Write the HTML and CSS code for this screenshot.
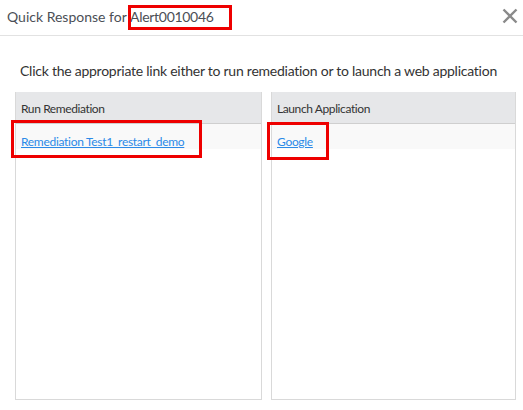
FILE: index.html
```html
<!DOCTYPE html>
<html>
<head>
<meta charset="utf-8">
<link rel="stylesheet" href="styles.css">
</head>
<body>
<div class="dialog">
  <div class="header">
    <span class="title">Quick Response for <span class="alert-id">Alert0010046</span></span>
    <svg class="close" width="16" height="16" viewBox="0 0 16 16"><path d="M1.5 1.5 L14.5 14.5 M14.5 1.5 L1.5 14.5" stroke="#8a8a8a" stroke-width="2.4" fill="none"/></svg>
  </div>
  <span class="mark mark-title"></span>
  <p class="intro">Click the appropriate link either to run remediation or to launch a web application</p>
  <div class="panels">
    <div class="panel">
      <div class="panel-head">Run Remediation</div>
      <div class="panel-row"><span class="mark mark-left"></span><a href="#" class="link">Remediation Test1_restart_demo</a></div>
    </div>
    <div class="panel">
      <div class="panel-head">Launch Application</div>
      <div class="panel-row"><span class="mark mark-right"></span><a href="#" class="link">Google</a></div>
    </div>
  </div>
</div>
</body>
</html>
```
FILE: styles.css
```css
* { box-sizing: border-box; }
html, body { margin: 0; padding: 0; background: #fff; }
body { font-family: "Lato", "Open Sans", sans-serif; width: 523px; height: 410px; overflow: hidden; }
.dialog { position: relative; }
.header {
  height: 36px;
  border-bottom: 1px solid #e2e2e2;
  display: flex;
  align-items: center;
  justify-content: space-between;
  padding: 0 5px 3px 7px;
}
.title { font-size: 14px; letter-spacing: 0; color: #4b4f56; }
.alert-id { letter-spacing: -0.3px; }
.mark { position: absolute; border: 3px solid #ee0000; display: block; }
.mark-title { left: 128px; top: 5px; width: 104px; height: 25px; }
.close { display: block; margin-bottom: 1px; }
.intro {
  margin: 26px 0 0 20px;
  font-size: 14px;
  letter-spacing: -0.25px;
  color: #333;
  line-height: 18px;
  white-space: nowrap;
}
.panels {
  display: grid;
  grid-template-columns: 247px 245px;
  column-gap: 9px;
  margin: 12px 0 0 15px;
  height: 308px;
}
.panel {
  border: 1px solid #d9d9d9;
  border-top: none;
  display: flex;
  flex-direction: column;
}
.panel-head {
  height: 32px;
  background: #e6e7e9;
  border-bottom: 1px solid #cfcfcf;
  font-size: 12px;
  letter-spacing: -0.4px;
  color: #333;
  padding: 9px 0 0 5px;
}
.panel-row {
  height: 25px;
  background: #f9f9f9;
  padding: 6px 0 0 5px;
  position: relative;
}
.link { font-size: 12px; letter-spacing: -0.3px; color: #2b8ae8; text-decoration: underline; }
.mark-left { left: -5px; top: -4px; width: 191px; height: 38px; }
.mark-right { left: -5px; top: -2px; width: 62px; height: 38px; }
```
